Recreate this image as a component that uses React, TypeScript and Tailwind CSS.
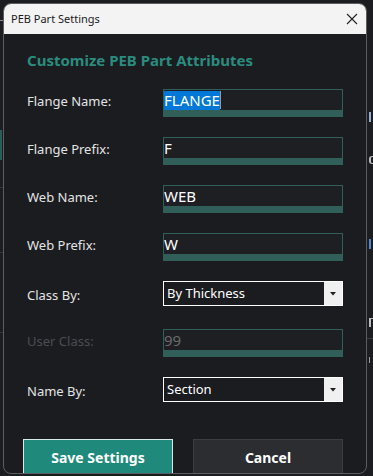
import React from "react";

const font = { fontFamily: '"Noto Sans", "Open Sans", sans-serif' };

function TextRow({ label, value, selected, disabled }: { label: string; value: string; selected?: boolean; disabled?: boolean }) {
  return (
    <div className="flex h-[48px] shrink-0 items-start">
      <div className={`w-[136px] h-[24px] leading-[24px] text-[13px] ${disabled ? "text-[#4a4c52]" : "text-[#e4e4e4]"}`}>{label}</div>
      <div className="w-[180px] h-[28px] flex flex-col border border-[#2f5f58] bg-[#1e1f23]">
        <div className={`flex-1 flex items-center text-[15px] leading-none ${disabled ? "text-[#6a6a6a]" : "text-white"}`}>
          {selected ? (
            <>
              <span className="bg-[#0078d7] h-[19px] flex items-center">{value}</span>
              <span className="w-px h-[18px] bg-[#9a9a9a]" />
            </>
          ) : (
            <span>{value}</span>
          )}
        </div>
        <div className="h-[6px] bg-[#2f5f58]" />
      </div>
    </div>
  );
}

function ComboRow({ label, value }: { label: string; value: string }) {
  return (
    <div className="flex h-[48px] shrink-0 items-start">
      <div className="w-[136px] h-[24px] leading-[24px] mt-[2px] text-[13px] text-[#e4e4e4]">{label}</div>
      <div className="w-[180px] h-[25px] flex border border-white bg-[#1b1c20]">
        <div className="flex-1 flex items-center pl-[3px] text-[13px] text-white">{value}</div>
        <div className="w-[18px] bg-[#f0f0f0] flex items-center justify-center">
          <svg width="6" height="4" viewBox="0 0 6 4">
            <path d="M0 0 L6 0 L3 3.5 Z" fill="#202020" />
          </svg>
        </div>
      </div>
    </div>
  );
}

export default function App() {
  return (
    <div className="relative w-[373px] h-[476px] bg-[#1c1d21] overflow-hidden" style={font}>
      {/* background app peeking out */}
      <div className="absolute left-0 top-[20px] w-[3px] h-px bg-[#8a8a8a]" />
      <div className="absolute left-0 top-[130px] w-[2px] h-[30px] bg-[#2a5e58]" />
      <div className="absolute left-0 top-[187px] w-[3px] h-px bg-[#35363b]" />
      <div className="absolute left-0 top-[252px] w-[3px] h-px bg-[#35363b]" />
      <div className="absolute left-0 top-[332px] w-[3px] h-px bg-[#35363b]" />
      <div className="absolute left-[369px] top-[112px] w-[2px] h-[10px] bg-[#8fb0d8]" />
      <div className="absolute left-[369px] top-[156px] w-[4px] h-[8px] border-l-2 border-y border-[#bdbdbd] rounded-l-[3px]" />
      <div className="absolute left-[369px] top-[239px] w-[2px] h-[10px] bg-[#4a8ad8]" />
      <div className="absolute left-[369px] top-[318px] w-[4px] h-[9px] border-l-2 border-t border-[#bdbdbd]" />
      <div className="absolute left-[369px] top-[357px] w-[3px] h-[6px] border-l border-[#9a9a9a]" />
      <div className="absolute left-[367px] top-[338px] w-[6px] h-px bg-[#3a3b40]" />

      {/* dialog window */}
      <div className="absolute left-[3px] top-[3px] w-[364px] h-[471px] rounded-[8px] border border-[#5c5d60] overflow-hidden flex flex-col bg-[#1b1c20]">
        <div className="h-[30px] shrink-0 bg-[#f3f3f3] flex items-center justify-between pl-[7px] pr-[6px]">
          <span className="text-[11px] text-[#1a1a1a]">PEB Part Settings</span>
          <svg width="12" height="12" viewBox="0 0 12 12" className="mr-[2px]">
            <path d="M1 1 L11 11 M11 1 L1 11" stroke="#222" strokeWidth="1.1" />
          </svg>
        </div>
        <div className="flex-1 flex flex-col pt-[15px] pl-[23px]">
          <div className="h-[22px] shrink-0 leading-[22px] text-[15px] font-bold text-[#2a8c7f] mb-[18px]">Customize PEB Part Attributes</div>
          <TextRow label="Flange Name:" value="FLANGE" selected />
          <TextRow label="Flange Prefix:" value="F" />
          <TextRow label="Web Name:" value="WEB" />
          <TextRow label="Web Prefix:" value="W" />
          <ComboRow label="Class By:" value="By Thickness" />
          <TextRow label="User Class:" value="99" disabled />
          <ComboRow label="Name By:" value="Section" />
          <div className="flex shrink-0 gap-[20px] mt-[14px] -ml-[4px]">
            <button className="w-[150px] h-[40px] bg-[#1f8a7b] border border-[#d8e8e4] text-white font-bold text-[14px] pb-[3px]">Save Settings</button>
            <button className="w-[150px] h-[40px] bg-[#2c2d31] border border-[#3c3d42] text-white font-bold text-[14px] pb-[3px]">Cancel</button>
          </div>
        </div>
      </div>
    </div>
  );
}
